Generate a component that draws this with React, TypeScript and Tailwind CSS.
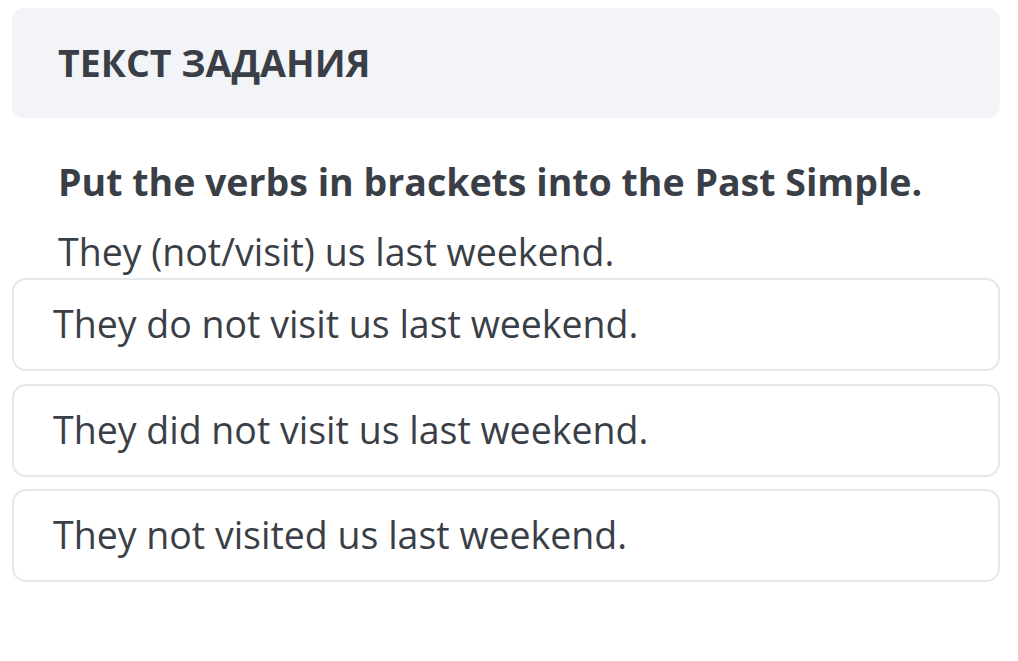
import React from "react";

const options = [
  "They do not visit us last weekend.",
  "They did not visit us last weekend.",
  "They not visited us last weekend.",
];

export default function App() {
  return (
    <div
      className="w-[1018px] h-[661px] bg-white text-[#3a3f47] pl-3 pr-[18px] pt-2"
      style={{ fontFamily: '"Open Sans", "Noto Sans", sans-serif' }}
    >
      <div className="h-[110px] rounded-[12px] bg-[#f3f4f7] flex items-center pl-[46px]">
        <div className="text-[37.5px] font-bold leading-none">ТЕКСТ ЗАДАНИЯ</div>
      </div>
      <div className="pl-[46px] pt-[42px]">
        <div className="text-[37.5px] font-bold leading-[44px]">Put the verbs in brackets into the Past Simple.</div>
        <div className="text-[37.5px] leading-[44px] mt-[26px]">They (not/visit) us last weekend.</div>
      </div>
      <div className="flex flex-col gap-[12.5px] mt-[4px]">
        {options.map((o) => (
          <div
            key={o}
            className="h-[93px] rounded-[14px] border-2 border-[#e5e7eb] flex items-center pl-[39px] text-[37.5px]"
          >
            {o}
          </div>
        ))}
      </div>
    </div>
  );
}
